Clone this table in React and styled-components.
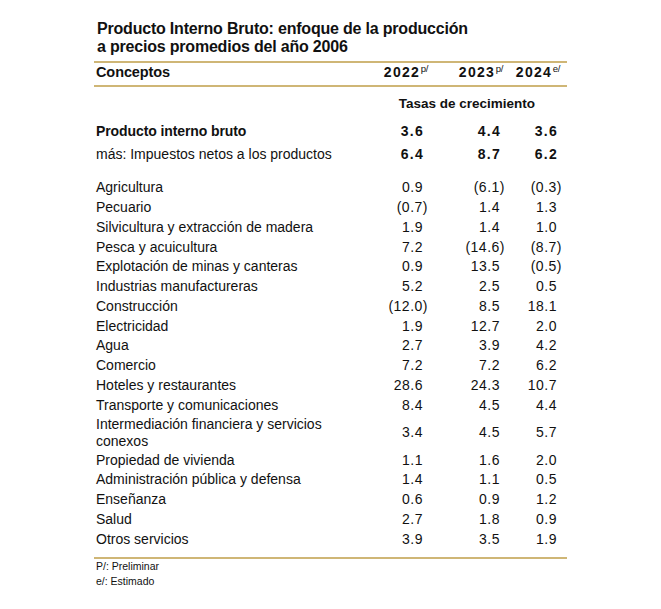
import React from 'react';
import styled, { createGlobalStyle } from 'styled-components';

const GlobalStyle = createGlobalStyle`
  body {
    margin: 0;
    background: #fff;
    color: #111;
    font-family: "Liberation Sans", Arial, sans-serif;
  }
`;

const RULE = '#cfb676';
const COLS = '250px 82px 77px 57px';

const Page = styled.div`
  padding: 20px 0 24px 94px;
`;

const Title = styled.h1`
  margin: 0 0 0 3px;
  font-size: 16px;
  font-weight: 700;
  line-height: 18px;
  letter-spacing: -0.2px;
`;

const Table = styled.div`
  width: 473px;
  margin-top: 5px;
  border-bottom: 2px solid ${RULE};
`;

const HeaderRow = styled.div`
  display: grid;
  grid-template-columns: ${COLS};
  padding: 0 5px 4px 2px;
  border-top: 2px solid ${RULE};
  border-bottom: 2px solid ${RULE};
  font-weight: 700;
  line-height: 18px;
`;

const HeadLabel = styled.div`
  font-size: 14.5px;
  letter-spacing: -0.1px;
`;

const Year = styled.div`
  text-align: right;
  font-size: 14px;
  letter-spacing: 1.3px;
  padding-right: ${(p) => p.$pad || 0}px;
`;

const Sup = styled.span`
  font-size: 9.5px;
  font-weight: 400;
  letter-spacing: -0.3px;
  vertical-align: 5px;
  line-height: 0;
  margin-left: 0.5px;
`;

const Body = styled.div`
  padding: 7px 5px 7.5px 2px;
`;

const SubHeader = styled.div`
  display: grid;
  grid-template-columns: ${COLS};
  line-height: 20px;
`;

const Span = styled.div`
  grid-column: 2 / 5;
  text-align: right;
  padding-right: 27px;
  font-size: 13.5px;
  font-weight: 700;
  letter-spacing: 0;
`;

const Row = styled.div`
  display: grid;
  grid-template-columns: ${COLS};
  align-items: center;
  margin-top: ${(p) => p.$gap || 0}px;
  min-height: ${(p) => (p.$double ? 35.25 : 19.75)}px;
  font-size: 14px;
`;

const Label = styled.div`
  font-weight: ${(p) => (p.$bold ? 700 : 400)};
  line-height: ${(p) => (p.$double ? 17 : 19.75)}px;
  letter-spacing: ${(p) => (p.$bold ? -0.1 : 0)}px;
`;

const Num = styled.div`
  text-align: right;
  line-height: 19.75px;
  font-weight: ${(p) => (p.$bold ? 700 : 400)};
  letter-spacing: ${(p) => (p.$bold ? 1.3 : 0.5)}px;
  padding-right: ${(p) => (p.$neg ? 0 : p.$bold ? 4 : 5)}px;
`;

const Notes = styled.div`
  padding-left: 2px;
  font-size: 10.5px;
  line-height: 15.5px;
`;

const sectors = [
  ['Agricultura', '0.9', '(6.1)', '(0.3)'],
  ['Pecuario', '(0.7)', '1.4', '1.3'],
  ['Silvicultura y extracción de madera', '1.9', '1.4', '1.0'],
  ['Pesca y acuicultura', '7.2', '(14.6)', '(8.7)'],
  ['Explotación de minas y canteras', '0.9', '13.5', '(0.5)'],
  ['Industrias manufactureras', '5.2', '2.5', '0.5'],
  ['Construcción', '(12.0)', '8.5', '18.1'],
  ['Electricidad', '1.9', '12.7', '2.0'],
  ['Agua', '2.7', '3.9', '4.2'],
  ['Comercio', '7.2', '7.2', '6.2'],
  ['Hoteles y restaurantes', '28.6', '24.3', '10.7'],
  ['Transporte y comunicaciones', '8.4', '4.5', '4.4'],
  ['Intermediación financiera y servicios conexos', '3.4', '4.5', '5.7'],
  ['Propiedad de vivienda', '1.1', '1.6', '2.0'],
  ['Administración pública y defensa', '1.4', '1.1', '0.5'],
  ['Enseñanza', '0.6', '0.9', '1.2'],
  ['Salud', '2.7', '1.8', '0.9'],
  ['Otros servicios', '3.9', '3.5', '1.9'],
];

const DataRow = ({ label, values, boldLabel, boldNums, gap }) => {
  const double = label.length > 40;
  return (
    <Row $gap={gap} $double={double}>
      <Label $bold={boldLabel} $double={double}>{label}</Label>
      {values.map((v, i) => (
        <Num key={i} $bold={boldNums} $neg={v.startsWith('(')}>
          {v}
        </Num>
      ))}
    </Row>
  );
};

export default function App() {
  return (
    <Page>
      <GlobalStyle />
      <Title>
        Producto Interno Bruto: enfoque de la producción
        <br />a precios promedios del año 2006
      </Title>
      <Table>
        <HeaderRow>
          <HeadLabel>Conceptos</HeadLabel>
          <Year>
            2022<Sup>p/</Sup>
          </Year>
          <Year $pad={2}>
            2023<Sup>p/</Sup>
          </Year>
          <Year $pad={2}>
            2024<Sup>e/</Sup>
          </Year>
        </HeaderRow>
        <Body>
          <SubHeader>
            <Span>Tasas de crecimiento</Span>
          </SubHeader>
          <DataRow
            label="Producto interno bruto"
            values={['3.6', '4.4', '3.6']}
            boldLabel
            boldNums
            gap={8}
          />
          <DataRow
            label="más: Impuestos netos a los productos"
            values={['6.4', '8.7', '6.2']}
            boldNums
            gap={3.5}
          />
          {sectors.map(([label, ...values], i) => (
            <DataRow key={label} label={label} values={values} gap={i === 0 ? 13.25 : 0} />
          ))}
        </Body>
      </Table>
      <Notes>
        <div>P/: Preliminar</div>
        <div>e/: Estimado</div>
      </Notes>
    </Page>
  );
}
